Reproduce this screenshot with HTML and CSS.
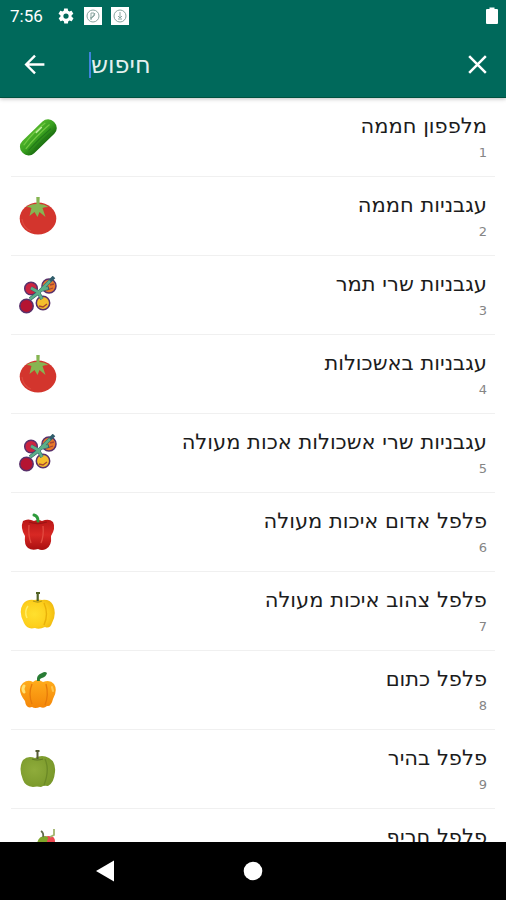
FILE: index.html
```html
<!DOCTYPE html>
<html lang="he">
<head>
<meta charset="utf-8">
<meta name="viewport" content="width=device-width, initial-scale=1">
<title>חיפוש</title>
<link rel="stylesheet" href="styles.css">
</head>
<body>
<svg class="defs" aria-hidden="true">
  <defs>
    <linearGradient id="g-cucumber" x1="0" y1="0" x2="0" y2="1"><stop offset="0" stop-color="#4fb32a"/><stop offset=".5" stop-color="#39a01f"/><stop offset="1" stop-color="#1b7010"/></linearGradient>
    <linearGradient id="g-red" x1="0" y1="0" x2="0" y2="1"><stop offset="0" stop-color="#b81616"/><stop offset=".5" stop-color="#d82824"/><stop offset="1" stop-color="#a90f10"/></linearGradient>
    <radialGradient id="g-yellow" cx=".4" cy=".5" r=".7"><stop offset="0" stop-color="#ffe02e"/><stop offset=".6" stop-color="#fdcf1c"/><stop offset="1" stop-color="#ecb40c"/></radialGradient>
    <linearGradient id="g-orange" x1="0" y1="0" x2="0" y2="1"><stop offset="0" stop-color="#ffad1c"/><stop offset="1" stop-color="#f48608"/></linearGradient>
    <radialGradient id="g-green" cx=".4" cy=".45" r=".65"><stop offset="0" stop-color="#8fac3b"/><stop offset="1" stop-color="#789729"/></radialGradient>

    <symbol id="cucumber" viewBox="0 0 38 38">
      <g transform="rotate(-44 19 19)">
        <rect x="-3" y="11" width="44" height="17" rx="8" fill="url(#g-cucumber)"/>
        <path d="M3 15Q19 12 34 14M2 19Q18 17 36 18" stroke="#73ca43" stroke-width="1.200" fill="none"/>
        <path d="M3 22Q19 21 34 22M8 25Q20 24 31 25" stroke="#22781a" stroke-width="1" fill="none"/>
        <path d="M21 14.500h7" stroke="#c3efa0" stroke-width="1.500" stroke-linecap="round"/>
      </g>
    </symbol>
    <symbol id="tomato" viewBox="0 0 38 38">
      <ellipse cx="19" cy="21.500" rx="18.300" ry="16" fill="#d3352d"/>
      <path d="M3 22Q4 31 12 34" stroke="#dc4a40" stroke-width="1.200" fill="none"/>
      <path d="M17.300 0h3.400l-.2 7q5 0 9 3-4 0-6 1l3 9-6-5-2 5-3-5-5 4 2-8q-2-1-5-1 4-3 10-3z" fill="#86b552"/>
    </symbol>
    <symbol id="cherry" viewBox="0 0 38 38">
      <g stroke="#59306a" stroke-width="1.500">
        <circle cx="12" cy="12.500" r="6.300" fill="#cb2440"/>
        <circle cx="30" cy="10" r="7" fill="#e8782b"/>
        <circle cx="7.500" cy="30" r="6.700" fill="#b51432"/>
        <circle cx="24" cy="27" r="6.700" fill="#f5be2d"/>
      </g>
      <path d="M28 14l6-2M31 9l4-1M20 30l4 1 4-3" stroke="#a84631" stroke-width="1.300" fill="none"/>
      <path d="M11 23L19 17L35 1M12 12l7 4 4 7M22 14l8-2" stroke="#315d6b" stroke-width="3.600" fill="none" stroke-linejoin="round"/>
      <path d="M11 23L19 17L31 5M12 12l7 4 4 7M22 14l7-2" stroke="#5cae87" stroke-width="2.600" fill="none" stroke-linejoin="round"/>
    </symbol>
    <symbol id="pepper-red" viewBox="0 0 38 38">
      <path d="M4 8Q9 5 15 8Q19 6 23 8Q30 5 34 9Q37 15 32 23Q33 33 27 36Q23 38 19 36Q13 38 9 35Q5 32 6 23Q1 15 4 8z" fill="url(#g-red)"/>
      <path d="M10 12Q9 22 12 30M24 13Q25 23 22 30" stroke="#e24b40" stroke-width="1.300" fill="none"/>
      <path d="M10 9Q18 12 28 9" stroke="#9b1414" stroke-width="1.300" fill="none"/>
      <path d="M19 8Q19 3 15 2" stroke="#2d9a3b" stroke-width="3" stroke-linecap="round" fill="none"/>
    </symbol>
    <symbol id="pepper-yellow" viewBox="0 0 38 38">
      <path d="M4 12Q8 7 15 8Q19 7 23 8Q31 7 34 13Q38 22 33 31Q31 37 26 35Q20 38 16 36Q8 38 5 31Q-1 20 4 12z" fill="url(#g-yellow)"/>
      <path d="M25 11Q30 22 25 33" stroke="#e8b00a" stroke-width="1.400" fill="none"/>
      <path d="M9 14Q5 19 8 26" stroke="#ffee68" stroke-width="1.500" fill="none"/>
      <path d="M14 9Q19 11 23 9" stroke="#b79a16" stroke-width="1.300" fill="none"/>
      <path d="M17 1h4M18.700 1v8" stroke="#526224" stroke-width="2.200" fill="none"/>
    </symbol>
    <symbol id="pepper-orange" viewBox="0 0 38 38">
      <path d="M4 12Q9 8 14 11Q18 7 24 11Q31 8 35 13Q39 19 34 28Q32 36 28 35Q25 38 21 36Q16 38 13 36Q7 38 6 30Q-3 18 4 12z" fill="url(#g-orange)"/>
      <path d="M13 13Q9 23 13 33M27 13Q30 24 26 34" stroke="#e67a0a" stroke-width="1.300" fill="none"/>
      <path d="M5 15Q3 18 5 21" stroke="#ffe071" stroke-width="3" fill="none" stroke-linecap="round"/>
      <path d="M33 16l1 4" stroke="#ffc54c" stroke-width="2" stroke-linecap="round"/>
      <path d="M18 10Q17 4 23 2Q26 0 28 2Q27 6 23 7Q20 8 21 10z" fill="#287c35"/>
    </symbol>
    <symbol id="pepper-green" viewBox="0 0 38 38">
      <path d="M4 10Q9 5 16 8Q23 4 30 8Q37 12 36 22Q35 33 29 36Q25 35 22 37Q18 36 14 37Q6 36 4 30Q-1 18 4 10z" fill="url(#g-green)"/>
      <path d="M26 9Q31 20 25 35" stroke="#6b8926" stroke-width="1.300" fill="none"/>
      <path d="M13 9Q18 11 24 9" stroke="#5d7824" stroke-width="1.200" fill="none"/>
      <path d="M16.500 1h4M18.500 1v8" stroke="#545b33" stroke-width="2" fill="none"/>
    </symbol>
    <symbol id="pepper-hot" viewBox="0 0 38 38">
      <path d="M24 9q5-4 11 0l1 5-4 14-7 8z" fill="#ec4950"/>
      <path d="M18 15q1-8 8-8 5 1 5 7l-2 9-12 14z" fill="#80a72b"/>
      <path d="M28 14q0-6 4-7 4 1 4 6l-4 9-4-4z" fill="#ec4950"/>
      <path d="M24 8q1-4-2-6" stroke="#626b4c" stroke-width="1.800" fill="none"/>
      <path d="M31 8l4-2V0" stroke="#a1b56d" stroke-width="1.800" fill="none"/>
    </symbol>
  </defs>
</svg>

<header class="top">
  <div class="status">
    <span class="clock">7:56</span>
    <svg class="gear" viewBox="0 0 24 24"><path fill="#fff" fill-rule="evenodd" d="M19.400 13c0-.3.100-.600.100-1s0-.700-.100-1l2.100-1.600c.2-.2.300-.4.100-.6l-2-3.500c-.1-.2-.4-.3-.6-.2l-2.500 1c-.5-.4-1.100-.7-1.700-1l-.4-2.600c0-.3-.2-.5-.5-.5h-4c-.2 0-.4.200-.5.400l-.4 2.700c-.6.200-1.100.600-1.700 1l-2.500-1c-.2-.1-.5 0-.6.200l-2 3.500c-.1.200-.1.500.1.600L4.600 11c0 .3-.100.600-.1 1s0 .7.100 1l-2.100 1.600c-.2.200-.3.400-.1.600l2 3.500c.1.200.4.300.6.200l2.500-1c.5.400 1.100.7 1.700 1l.4 2.600c0 .3.200.5.500.5h4c.3 0 .5-.2.500-.4l.4-2.700c.6-.2 1.200-.6 1.700-1l2.500 1c.2.100.5 0 .6-.2l2-3.500c.1-.2.100-.5-.1-.6zM12 15.500a3.500 3.500 0 1 1 0-7 3.500 3.500 0 0 1 0 7z"/></svg>
    <svg class="badge" viewBox="0 0 18 18"><path fill="#fff" d="M0 0h18v18H0z"/><circle cx="9" cy="9" r="6" fill="none" stroke="#8aa5a0" stroke-width="1"/><path d="M7 13V6h3q2 2-1 4l-3 1M11 6l-4 6" fill="none" stroke="#8aa5a0"/></svg>
    <svg class="badge" viewBox="0 0 18 18"><path fill="#fff" d="M0 0h18v18H0z"/><circle cx="9" cy="9" r="6" fill="none" stroke="#8aa5a0" stroke-width="1"/><path d="M9 5v5M7 9l2 2 2-2M7 12h4" fill="none" stroke="#8aa5a0"/></svg>
    <svg class="battery" viewBox="0 0 12 18"><path fill="#fff" d="M3.500 2V.500h5V2H11q1 0 1 1v13q0 1-1 1H1q-1 0-1-1V3q0-1 1-1z"/></svg>
  </div>
  <form class="search" role="search">
    <button class="icon-button" type="button" aria-label="חזרה"><svg viewBox="0 0 24 24"><path d="M21.500 12H4M12.500 3.500L4 12l8.500 8.500" fill="none" stroke="#fff" stroke-width="2.300"/></svg></button>
    <input class="query" type="text" aria-label="חיפוש" placeholder="חיפוש">
    <button class="icon-button" type="button" aria-label="ניקוי"><svg viewBox="0 0 24 24"><path d="M4 4l16 16M20 4L4 20" fill="none" stroke="#fff" stroke-width="2.400"/></svg></button>
  </form>
</header>

<main class="results">
  <ul class="list">
    <li class="item"><svg class="thumb"><use href="#cucumber"/></svg><div class="text" dir="rtl"><span class="name">מלפפון חממה</span><span class="number">1</span></div></li>
    <li class="item"><svg class="thumb"><use href="#tomato"/></svg><div class="text" dir="rtl"><span class="name">עגבניות חממה</span><span class="number">2</span></div></li>
    <li class="item"><svg class="thumb"><use href="#cherry"/></svg><div class="text" dir="rtl"><span class="name">עגבניות שרי תמר</span><span class="number">3</span></div></li>
    <li class="item"><svg class="thumb"><use href="#tomato"/></svg><div class="text" dir="rtl"><span class="name">עגבניות באשכולות</span><span class="number">4</span></div></li>
    <li class="item"><svg class="thumb"><use href="#cherry"/></svg><div class="text" dir="rtl"><span class="name">עגבניות שרי אשכולות אכות מעולה</span><span class="number">5</span></div></li>
    <li class="item"><svg class="thumb"><use href="#pepper-red"/></svg><div class="text" dir="rtl"><span class="name">פלפל אדום איכות מעולה</span><span class="number">6</span></div></li>
    <li class="item"><svg class="thumb"><use href="#pepper-yellow"/></svg><div class="text" dir="rtl"><span class="name">פלפל צהוב איכות מעולה</span><span class="number">7</span></div></li>
    <li class="item"><svg class="thumb"><use href="#pepper-orange"/></svg><div class="text" dir="rtl"><span class="name">פלפל כתום</span><span class="number">8</span></div></li>
    <li class="item"><svg class="thumb"><use href="#pepper-green"/></svg><div class="text" dir="rtl"><span class="name">פלפל בהיר</span><span class="number">9</span></div></li>
    <li class="item"><svg class="thumb"><use href="#pepper-hot"/></svg><div class="text" dir="rtl"><span class="name">פלפל חריף</span></div></li>
  </ul>
</main>

<nav class="system">
  <button class="system-button" type="button" aria-label="Back"><svg viewBox="0 0 22 22"><path d="M1 11L19 .500v21z" fill="#fff"/></svg></button>
  <button class="system-button" type="button" aria-label="Home"><svg viewBox="0 0 22 22"><circle cx="11" cy="11" r="9.300" fill="#fff"/></svg></button>
  <span></span>
</nav>
</body>
</html>
```
FILE: styles.css
```css
* {
  box-sizing: border-box;
}

body {
  margin: 0;
  height: 100vh;
  display: flex;
  flex-direction: column;
  overflow: hidden;
  background: #fff;
  color: #1c1c1c;
  font-family: "DejaVu Sans", sans-serif;
}

button {
  padding: 0;
  border: 0;
  background: none;
}

svg {
  display: block;
}

.defs {
  position: absolute;
  width: 0;
  height: 0;
}

.top {
  flex: none;
  background: #00695b;
  color: #fff;
  border-bottom: 1px solid #00513f;
  box-shadow: 0 1px 4px rgba(0, 0, 0, 0.25);
  z-index: 1;
}

.status {
  height: 32px;
  padding: 0 8px 0 10px;
  display: flex;
  align-items: center;
}

.clock {
  font: 17px/32px Roboto, sans-serif;
}

.gear {
  width: 18px;
  height: 18px;
  margin-left: 14px;
}

.badge {
  width: 18px;
  height: 18px;
  margin-left: 9px;
}

.battery {
  width: 12px;
  height: 18px;
  margin-left: auto;
}

.search {
  height: 65px;
  padding: 0 16px 0 22px;
  display: flex;
  align-items: center;
}

.icon-button svg {
  width: 25px;
  height: 25px;
}

.query {
  flex: 1;
  min-width: 0;
  height: 26px;
  margin: 0 16px 0 42px;
  padding: 0;
  border: 0;
  border-left: 2px solid #3f83dc;
  outline: 0;
  background: none;
  color: #fff;
  font: 24px/26px "DejaVu Sans", sans-serif;
}

.query::placeholder {
  color: #e4f0ee;
  opacity: 1;
}

.results {
  flex: 1;
  min-height: 0;
  overflow: hidden;
}

.list {
  margin: 0;
  padding: 0 11px;
  list-style: none;
}

.item {
  height: 79px;
  padding: 0 8px;
  display: flex;
  align-items: center;
  border-bottom: 1px solid #f0f0f0;
}

.thumb {
  flex: none;
  width: 38px;
  height: 38px;
}

.text {
  flex: 1;
  align-self: stretch;
  padding-top: 14px;
  display: flex;
  flex-direction: column;
}

.name {
  font-size: 21px;
  line-height: 28px;
}

.number {
  color: #858585;
  font-size: 13px;
  line-height: 26px;
}

.system {
  flex: none;
  height: 58px;
  padding: 0 32px;
  display: grid;
  grid-template-columns: repeat(3, 1fr);
  align-items: center;
  justify-items: center;
  background: #000;
}

.system-button svg {
  width: 22px;
  height: 22px;
}
```
